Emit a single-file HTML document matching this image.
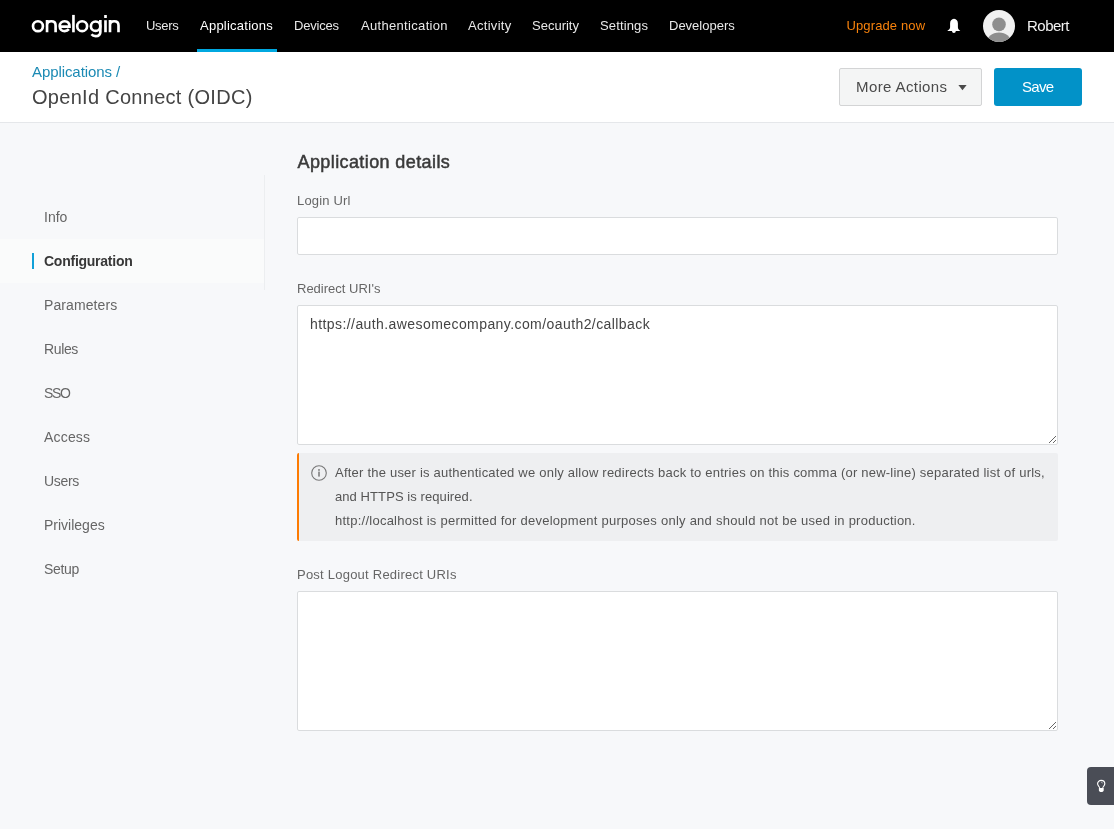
<!DOCTYPE html>
<html><head><meta charset="utf-8">
<style>
*{box-sizing:border-box;}
html,body{margin:0;padding:0;}
body{will-change:transform;width:1114px;height:829px;overflow:hidden;position:relative;background:#f7f8fa;font-family:"Liberation Sans",sans-serif;}
.a{position:absolute;white-space:nowrap;line-height:1;}
#hdr{position:absolute;left:0;top:0;width:1114px;height:52px;background:#000;}
.nav{position:absolute;top:19px;font-size:13px;color:#e8e8e8;line-height:13px;}
#sub{position:absolute;left:0;top:52px;width:1114px;height:71px;background:#fff;border-bottom:1px solid #e5e7ea;}
.side{position:absolute;left:44px;font-size:14px;color:#666;line-height:14px;}
.lbl{position:absolute;left:297px;font-size:13px;color:#666;line-height:13px;}
.inp{position:absolute;left:297px;width:761px;background:#fff;border:1px solid #dadcde;border-radius:2px;}
textarea.inp{resize:both;margin:0;padding:0;outline:none;font-family:"Liberation Sans",sans-serif;}
</style></head>
<body>
<div id="hdr">
  <svg style="position:absolute;left:0;top:0;" width="130" height="52" viewBox="0 0 130 52" fill="none" stroke="#fff" stroke-width="2.65">
    <circle cx="37.95" cy="26.2" r="4.95"/>
    <path d="M47.05 32.3 V20 M47.05 25.2 C47.05 22.4 49 21.25 51.3 21.25 C53.7 21.25 55.6 22.6 55.6 25.4 V32.3"/>
    <path d="M59.7 26.6 H69.5 C69.5 23 67.4 21.25 64.6 21.25 C61.7 21.25 59.7 23.5 59.7 26.2 C59.7 29.1 61.8 31.15 64.7 31.15 C66.6 31.15 68 30.3 68.9 29.2"/>
    <path d="M73.45 14.9 V32.3"/>
    <circle cx="82.15" cy="26.15" r="4.95"/>
    <circle cx="95.6" cy="26.15" r="4.7"/>
    <path d="M100.35 20 V32 C100.35 35 98.3 36.15 95.6 36.15 C93.8 36.15 92.4 35.5 91.5 34.3"/>
    <path d="M105.5 20.2 V32.3 M105.5 14.9 V18"/>
    <path d="M110 32.3 V20 M110 25.2 C110 22.4 111.9 21.25 114.2 21.25 C116.6 21.25 118.5 22.6 118.5 25.4 V32.3"/>
  </svg>
  <div class="nav" style="left:146px;letter-spacing:-0.3px;">Users</div>
  <div class="nav" style="left:200px;color:#fff;letter-spacing:0.24px;">Applications</div>
  <div style="position:absolute;left:197px;top:49px;width:80px;height:3px;background:#00a8e0;"></div>
  <div class="nav" style="left:294px;letter-spacing:-0.2px;">Devices</div>
  <div class="nav" style="left:361px;letter-spacing:0.32px;">Authentication</div>
  <div class="nav" style="left:468px;letter-spacing:0.3px;">Activity</div>
  <div class="nav" style="left:532px;">Security</div>
  <div class="nav" style="left:600px;letter-spacing:0.14px;">Settings</div>
  <div class="nav" style="left:669px;">Developers</div>
  <div class="nav" style="left:846.5px;color:#f7820c;letter-spacing:0.12px;">Upgrade now</div>
  <svg style="position:absolute;left:946px;top:18px;" width="16" height="16" viewBox="0 0 16 16">
    <path d="M7.9 0.8 C5.6 1.1 4.1 2.8 4.1 5.5 L4.1 9.3 C4.1 10.7 3 11.7 1.2 12.9 L14.3 12.9 C12.7 11.7 11.9 10.7 11.9 9.3 L11.9 5.5 C11.9 2.8 10.4 1.1 8.1 0.8 Z" fill="#fff"/>
    <path d="M5.9 12.5 H9.9 C9.8 14.2 9 15 7.9 15 C6.8 15 6 14.2 5.9 12.5 Z" fill="#fff"/>
  </svg>
  <svg style="position:absolute;left:983px;top:10px;" width="32" height="32" viewBox="0 0 32 32">
    <defs><clipPath id="cc"><circle cx="16" cy="16" r="16"/></clipPath></defs>
    <circle cx="16" cy="16" r="16" fill="#f1f1f1"/>
    <circle cx="16" cy="14.4" r="6.8" fill="#8e8e8e"/>
    <ellipse clip-path="url(#cc)" cx="16" cy="33" rx="12.5" ry="10.5" fill="#8e8e8e"/>
  </svg>
  <div class="a" style="left:1027px;top:17.5px;font-size:15px;color:#f2f2f2;line-height:15px;letter-spacing:-0.5px;">Robert</div>
</div>

<div id="sub">
  <div class="a" style="left:32px;top:12px;font-size:15px;color:#1b8ab4;line-height:15px;letter-spacing:-0.08px;">Applications /</div>
  <div class="a" style="left:32px;top:35px;font-size:20px;color:#444;line-height:20px;letter-spacing:0.29px;">OpenId Connect (OIDC)</div>
  <div style="position:absolute;left:839px;top:16px;width:143px;height:38px;background:#f4f5f5;border:1px solid #d3d4d5;border-radius:2px;"></div>
  <div class="a" style="left:856px;top:26.5px;font-size:15px;color:#4a4a4a;line-height:15px;letter-spacing:0.4px;">More Actions</div>
  <svg style="position:absolute;left:958px;top:32.5px;" width="9" height="6" viewBox="0 0 9 6"><path d="M0.4 0 L8.6 0 L4.5 5.2 Z" fill="#4a4a4a"/></svg>
  <div style="position:absolute;left:994px;top:16px;width:88px;height:38px;background:#0292c8;border-radius:3px;"></div>
  <div class="a" style="left:1022px;top:27px;font-size:15px;color:#fff;line-height:15px;letter-spacing:-0.7px;">Save</div>
</div>

<!-- sidebar -->
<div style="position:absolute;left:0;top:239px;width:264px;height:44px;background:#fafbfb;"></div>
<div style="position:absolute;left:264px;top:175px;width:1px;height:115px;background:#eceef0;"></div>
<div style="position:absolute;left:32px;top:253px;width:2px;height:16px;background:#11a0d8;"></div>
<div class="side" style="top:210px;">Info</div>
<div class="side" style="top:253.5px;font-weight:bold;color:#383838;letter-spacing:-0.25px;">Configuration</div>
<div class="side" style="top:298px;letter-spacing:0.09px;">Parameters</div>
<div class="side" style="top:342px;letter-spacing:-0.37px;">Rules</div>
<div class="side" style="top:386px;letter-spacing:-1.3px;">SSO</div>
<div class="side" style="top:430px;letter-spacing:0.18px;">Access</div>
<div class="side" style="top:474px;letter-spacing:-0.3px;">Users</div>
<div class="side" style="top:518px;">Privileges</div>
<div class="side" style="top:562px;letter-spacing:-0.3px;">Setup</div>

<!-- main -->
<div class="a" style="left:297.5px;top:153px;font-size:18px;color:#3a3a3a;line-height:18px;letter-spacing:0.4px;-webkit-text-stroke:0.5px #3a3a3a;">Application details</div>
<div class="lbl" style="top:194px;letter-spacing:0.16px;">Login Url</div>
<div class="inp" style="top:217px;height:38px;"></div>
<div class="lbl" style="top:282px;">Redirect URI's</div>
<textarea class="inp" style="top:305px;height:140px;"></textarea>
<div class="a" style="left:310px;top:317px;font-size:14px;color:#444;line-height:14px;letter-spacing:0.42px;">https://auth.awesomecompany.com/oauth2/callback</div>

<div style="position:absolute;left:297px;top:453px;width:761px;height:88px;background:#eeeff1;border-left:2px solid #fd7b02;border-radius:2px;"></div>
<svg style="position:absolute;left:311px;top:465px;" width="16" height="16" viewBox="0 0 16 16">
  <circle cx="8" cy="8" r="7.3" fill="none" stroke="#777" stroke-width="1.1"/>
  <circle cx="8" cy="4.9" r="0.95" fill="#777"/>
  <rect x="7.25" y="6.6" width="1.5" height="5" fill="#777"/>
</svg>
<div class="a" style="left:335px;top:466px;font-size:13px;color:#555;line-height:13px;letter-spacing:0.22px;">After the user is authenticated we only allow redirects back to entries on this comma (or new-line) separated list of urls,</div>
<div class="a" style="left:335px;top:490px;font-size:13px;color:#555;line-height:13px;letter-spacing:0.08px;">and HTTPS is required.</div>
<div class="a" style="left:335px;top:514px;font-size:13px;color:#555;line-height:13px;letter-spacing:0.25px;">http://localhost is permitted for development purposes only and should not be used in production.</div>

<div class="lbl" style="top:568px;letter-spacing:0.23px;">Post Logout Redirect URIs</div>
<textarea class="inp" style="top:591px;height:140px;"></textarea>

<div style="position:absolute;left:1087px;top:767px;width:30px;height:38px;background:#4a4d56;border-radius:4px 0 0 4px;"></div>
<svg style="position:absolute;left:1095px;top:778px;" width="12" height="16" viewBox="0 0 12 16">
  <path d="M4.7 9.9 C4.2 8.4 2.6 7.5 2.6 5.8 C2.6 3.7 4.2 2.4 6.2 2.4 C8.2 2.4 9.8 3.7 9.8 5.8 C9.8 7.5 8.2 8.4 7.7 9.9" fill="none" stroke="#fff" stroke-width="1.15"/>
  <path d="M6.3 4.1 C6.9 4.2 7.4 4.7 7.5 5.3" fill="none" stroke="#fff" stroke-width="0.7"/>
  <path d="M3.9 9.9 H8.7 V12.6 C8.7 13.5 7.7 14.1 6.3 14.1 C4.9 14.1 3.9 13.5 3.9 12.6 Z" fill="#fff"/>
</svg>
</body></html>
